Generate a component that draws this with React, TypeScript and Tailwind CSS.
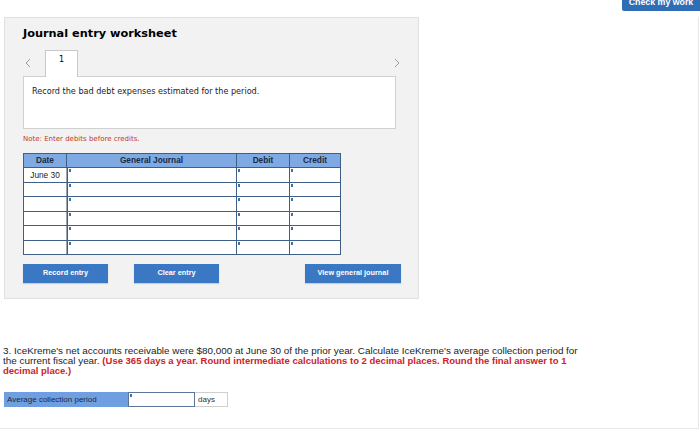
import React from "react";

const rows = [0, 1, 2, 3, 4, 5];
const rowH = [15, 14, 15, 14, 15, 14];

function Mark() {
  return <span className="absolute left-[1px] top-[1px] w-[2px] h-[3px] bg-[#3a6fb0]" />;
}

export default function App() {
  return (
    <div className="w-[700px] h-[434px] bg-white overflow-hidden relative" style={{ fontFamily: '"Liberation Sans", Arial, sans-serif' }}>
      <div className="flex justify-end h-[11px]">
        <div className="w-[78px] h-[11px] bg-[#2f6db5] rounded-bl-[2px] overflow-hidden flex justify-center">
          <span className="text-white font-bold text-[8.8px] leading-[9px] -mt-[2px] whitespace-nowrap">Check my work</span>
        </div>
      </div>
      <div className="w-[699px] h-[412px] border-r border-b border-[#e8e8e8]">
        <div className="mt-[6px] ml-[4px] w-[415px] h-[282px] bg-[#f2f2f2] border border-[#e0e0e0] pl-[18px] pt-[8px]">
          <div className="text-[11.3px] leading-[16px] font-bold text-black" style={{ fontFamily: '"DejaVu Sans", Verdana, sans-serif' }}>
            Journal entry worksheet
          </div>
          <div className="mt-[8px] flex items-end h-[26px] w-[373px] relative">
            <div className="w-[22px] h-[26px] flex items-center pl-[2px]">
              <svg width="6" height="10" viewBox="0 0 6 10"><path d="M5 1 L1 5 L5 9" fill="none" stroke="#9a9a9a" strokeWidth="1" /></svg>
            </div>
            <div className="w-[33px] h-[27px] bg-white border border-b-0 border-[#c8c8c8] relative z-10 -mb-[1px] flex justify-center pt-[4px]">
              <span className="text-[8px] leading-[10px] text-black" style={{ fontFamily: '"DejaVu Sans", Verdana, sans-serif' }}>1</span>
            </div>
            <div className="flex-1" />
            <div className="w-[10px] h-[26px] flex items-center justify-end -mr-[4px]">
              <svg width="6" height="10" viewBox="0 0 6 10"><path d="M1 1 L5 5 L1 9" fill="none" stroke="#9a9a9a" strokeWidth="1" /></svg>
            </div>
          </div>
          <div className="w-[373px] h-[53px] bg-white border border-[#d0d0d0] pl-[8px] pt-[8px]">
            <div className="text-[8.1px] leading-[12px] text-[#222]" style={{ fontFamily: '"DejaVu Sans", Verdana, sans-serif' }}>
              Record the bad debt expenses estimated for the period.
            </div>
          </div>
          <div className="mt-[5px] text-[7px] leading-[10px] text-[#c0392b]" style={{ fontFamily: '"DejaVu Sans", Verdana, sans-serif' }}>
            Note: Enter debits before credits.
          </div>
          <div className="mt-[9px] w-[318px] border border-[#3f5f86] bg-white">
            <div className="flex h-[13px] bg-[#7ea9e2] text-[8.3px] font-bold text-[#1a2a40] leading-[13px]">
              <div className="w-[43px] text-center border-r border-[#3f5f86]">Date</div>
              <div className="w-[170px] text-center border-r border-[#3f5f86]">General Journal</div>
              <div className="w-[53px] text-center border-r border-[#3f5f86]">Debit</div>
              <div className="flex-1 text-center">Credit</div>
            </div>
            {rows.map((r) => (
              <div key={r} className="flex border-t border-[#3f5f86]" style={{ height: rowH[r] }}>
                <div className="w-[43px] border-r border-[#9aa5b1] text-[8.3px] text-[#222] flex items-center justify-center">
                  {r === 0 ? "June 30" : ""}
                </div>
                <div className="w-[170px] border-r border-l border-[#3f5f86] relative"><Mark /></div>
                <div className="w-[53px] border-r border-[#3f5f86] relative"><Mark /></div>
                <div className="flex-1 relative"><Mark /></div>
              </div>
            ))}
          </div>
          <div className="mt-[9px] flex w-[378px] text-white font-bold text-[7.3px]">
            <div className="w-[85px] h-[19px] bg-[#3b78c3] flex items-center justify-center shadow-[0_1px_1px_rgba(0,0,0,0.15)]">Record entry</div>
            <div className="ml-[26px] w-[85px] h-[19px] bg-[#3b78c3] flex items-center justify-center shadow-[0_1px_1px_rgba(0,0,0,0.15)]">Clear entry</div>
            <div className="ml-auto w-[96px] h-[19px] bg-[#3b78c3] flex items-center justify-center shadow-[0_1px_1px_rgba(0,0,0,0.15)]">View general journal</div>
          </div>
        </div>
        <div className="mt-[47px] ml-[3px] w-[640px] text-[9.9px] leading-[10px] text-[#222] whitespace-nowrap">
          3. IceKreme's net accounts receivable were $80,000 at June 30 of the prior year. Calculate IceKreme's average collection period for
          <br />
          the current fiscal year.{" "}
          <span className="font-bold text-[9.5px] text-[#d0212a]">(Use 365 days a year. Round intermediate calculations to 2 decimal places. Round the final answer to 1</span>
          <br />
          <span className="font-bold text-[9.5px] text-[#d0212a]">decimal place.)</span>
        </div>
        <div className="mt-[16px] ml-[4px] flex h-[15px] text-[8px] leading-[15px]" style={{ fontFamily: '"Liberation Sans", Arial, sans-serif' }}>
          <div className="w-[124px] bg-[#6f9fe0] pl-[3px] text-[#1a2a40]">Average collection period</div>
          <div className="w-[67px] border border-[#5a7597] bg-white relative"><Mark /></div>
          <div className="w-[33px] border border-[#cfcfcf] border-l-0 pl-[3px] text-[#333] leading-[13px]">days</div>
        </div>
      </div>
    </div>
  );
}
